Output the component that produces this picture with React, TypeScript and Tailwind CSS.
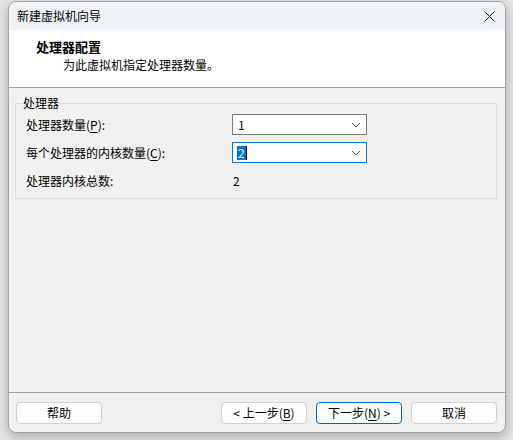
import React from "react";

const font = { fontFamily: '"Noto Sans CJK SC", "Noto Sans", sans-serif' };

function Mn({ k }: { k: string }) {
  return <span className="underline underline-offset-[2px]">{k}</span>;
}

function Chevron() {
  return (
    <svg width="10" height="6" viewBox="0 0 10 6" className="text-[#5f5f5f]">
      <path d="M1 1 L5 5 L9 1" fill="none" stroke="currentColor" strokeWidth="1" />
    </svg>
  );
}

function Combo({ value, focused }: { value: string; focused?: boolean }) {
  return (
    <div
      className={
        "h-[21px] w-[135px] bg-white flex items-center justify-between pl-[4px] pr-[5px] border " +
        (focused ? "border-[#0078d7]" : "border-[#7a7a7a]")
      }
    >
      {focused ? (
        <div className="flex items-center">
          <span className="bg-[#0078d7] text-white leading-[14px] px-[1px]">{value}</span>
          <span className="w-[1px] h-[14px] bg-black" />
        </div>
      ) : (
        <span className="leading-[14px] pl-[1px]">{value}</span>
      )}
      <Chevron />
    </div>
  );
}

function Btn({ children, primary }: { children: React.ReactNode; primary?: boolean }) {
  return (
    <button
      className={
        "h-[22px] w-[86px] rounded-[4px] bg-[#fdfdfd] text-[12px] text-black flex items-center justify-center border " +
        (primary ? "border-[#0067c0]" : "border-[#d0d0d0]")
      }
    >
      {children}
    </button>
  );
}

export default function App() {
  return (
    <div className="w-[513px] h-[440px] bg-[#e4e4e4] overflow-hidden text-[12px] text-black" style={font}>
      <div className="ml-[8px] mt-[1px] w-[498px] h-[432px] rounded-[8px] border border-[#a3a3a3] bg-[#f0f0f0] overflow-hidden flex flex-col shadow-[0_4px_12px_rgba(0,0,0,0.25)]">
        {/* title bar */}
        <div className="h-[28px] shrink-0 bg-[#eef2f7] flex items-center justify-between pl-[8px] pr-[10px]">
          <span className="text-[12px]">新建虚拟机向导</span>
          <svg width="11" height="11" viewBox="0 0 11 11">
            <path d="M0.5 0.5 L10.5 10.5 M10.5 0.5 L0.5 10.5" stroke="#1a1a1a" strokeWidth="1" />
          </svg>
        </div>

        {/* header */}
        <div className="h-[58px] shrink-0 bg-white border-b border-[#a0a0a0] pl-[27px] pt-[8px]">
          <div className="text-[13px] font-bold leading-[17px]">处理器配置</div>
          <div className="pl-[27px] leading-[17px] mt-[1px]">为此虚拟机指定处理器数量。</div>
        </div>

        {/* body */}
        <div className="flex-1 pt-[7px] pl-[6px] pr-[8px]">
          <fieldset className="border border-[#dcdcdc] pl-[10px] pt-[3px] pb-[7px]">
            <legend className="ml-[-4px] px-[1px] leading-[16px]">处理器</legend>
            <div className="grid grid-cols-[206px_135px] gap-y-[7px] items-center">
              <span>
                处理器数量(<Mn k="P" />):
              </span>
              <Combo value="1" />
              <span>
                每个处理器的内核数量(<Mn k="C" />):
              </span>
              <Combo value="2" focused />
              <span className="h-[21px] flex items-center">处理器内核总数:</span>
              <span className="pl-[1px]">2</span>
            </div>
          </fieldset>
        </div>

        {/* footer */}
        <div className="h-[40px] shrink-0 border-t border-[#a0a0a0] flex items-start pt-[9px] pl-[7px] pr-[8px]">
          <Btn>帮助</Btn>
          <div className="flex-1" />
          <div className="flex gap-[9px]">
            <Btn>
              &lt; 上一步(<Mn k="B" />)
            </Btn>
            <Btn primary>
              下一步(<Mn k="N" />) &gt;
            </Btn>
            <Btn>取消</Btn>
          </div>
        </div>
      </div>
    </div>
  );
}
